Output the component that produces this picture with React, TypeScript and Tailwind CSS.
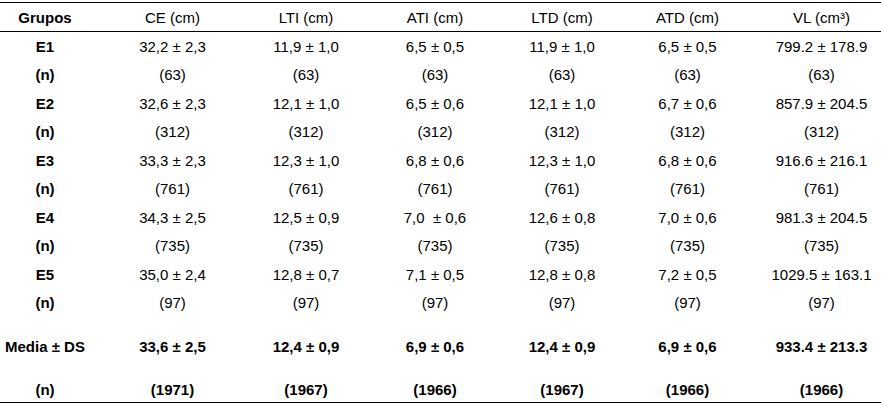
const headers = ["CE (cm)", "LTI (cm)", "ATI (cm)", "LTD (cm)", "ATD (cm)", "VL (cm³)"];

const groups = [
  { name: "E1", values: ["32,2 ± 2,3", "11,9 ± 1,0", "6,5 ± 0,5", "11,9 ± 1,0", "6,5 ± 0,5", "799.2 ± 178.9"], n: ["63", "63", "63", "63", "63", "63"] },
  { name: "E2", values: ["32,6 ± 2,3", "12,1 ± 1,0", "6,5 ± 0,6", "12,1 ± 1,0", "6,7 ± 0,6", "857.9 ± 204.5"], n: ["312", "312", "312", "312", "312", "312"] },
  { name: "E3", values: ["33,3 ± 2,3", "12,3 ± 1,0", "6,8 ± 0,6", "12,3 ± 1,0", "6,8 ± 0,6", "916.6 ± 216.1"], n: ["761", "761", "761", "761", "761", "761"] },
  { name: "E4", values: ["34,3 ± 2,5", "12,5 ± 0,9", "7,0  ± 0,6", "12,6 ± 0,8", "7,0 ± 0,6", "981.3 ± 204.5"], n: ["735", "735", "735", "735", "735", "735"] },
  { name: "E5", values: ["35,0 ± 2,4", "12,8 ± 0,7", "7,1 ± 0,5", "12,8 ± 0,8", "7,2 ± 0,5", "1029.5 ± 163.1"], n: ["97", "97", "97", "97", "97", "97"] },
];

const totals = ["33,6 ± 2,5", "12,4 ± 0,9", "6,9 ± 0,6", "12,4 ± 0,9", "6,9 ± 0,6", "933.4 ± 213.3"];
const totalN = ["1971", "1967", "1966", "1967", "1966", "1966"];

const cols = "grid grid-cols-[90px_165px_102px_156px_98px_153px_115px] items-center";

function Row({ label, cells, bold, height }: { label: string; cells: string[]; bold?: boolean; height: string }) {
  return (
    <div className={`${cols} ${height}`}>
      <div className="text-center font-bold whitespace-pre">{label}</div>
      {cells.map((c, i) => (
        <div key={i} className={`text-center whitespace-pre ${bold ? "font-bold" : ""}`}>
          {c}
        </div>
      ))}
    </div>
  );
}

export default function App() {
  return (
    <div className="w-[881px] h-[406px] bg-white pt-[2px] text-black text-[15px] leading-none font-['Liberation_Sans',Arial,sans-serif]">
      <div className="border-y border-black">
        {/* Header */}
        <div className={`${cols} h-[29px] border-b border-black`}>
          <div className="text-center font-bold">Grupos</div>
          {headers.map(h => (
            <div key={h} className="text-center">{h}</div>
          ))}
        </div>

        {/* Groups */}
        {groups.map(g => (
          <div key={g.name}>
            <Row label={g.name} cells={g.values} height="h-[28.5px]" />
            <Row label="(n)" cells={g.n.map(v => `(${v})`)} height="h-[28.5px]" />
          </div>
        ))}

        {/* Totals */}
        <Row label="Media ± DS" cells={totals} bold height="h-[59px]" />
        <Row label="(n)" cells={totalN.map(v => `(${v})`)} bold height="h-[26px]" />
      </div>
    </div>
  );
}
